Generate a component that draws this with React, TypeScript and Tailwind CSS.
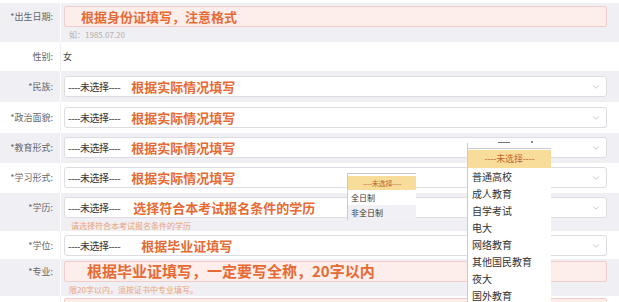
import { ChevronDown } from "lucide-react";

const font = { fontFamily: '"Noto Sans CJK SC", "Noto Sans", sans-serif' };

const Label = ({ text, top, h }: { text: string; top: number; h: number }) => (
    <div className="w-[60px] shrink-0 pr-[7px]">
        <div
            className="flex items-center justify-end text-[9px] text-[#666]"
            style={{ marginTop: top, height: h }}
        >
            {text}
        </div>
    </div>
);

const Select = ({ note, noteGap }: { note: string; noteGap: string }) => (
    <div className="h-[21px] rounded-[3px] border border-[#dcdce2] bg-white flex items-center pl-[3px] pr-[5px]">
        <span className="text-[10px] text-[#333] tracking-[-0.5px]">----未选择----</span>
        <span className={`${noteGap} text-[13px] font-bold text-[#e66a33]`}>{note}</span>
        <ChevronDown className="ml-auto text-[#aaa]" size={10} strokeWidth={1.5} />
    </div>
);

const Pink = ({ note, cls }: { note: string; cls: string }) => (
    <div className="h-[21px] rounded-[2px] border border-[#f0cdca] bg-[#fdeeec] flex items-center">
        <span className={`${cls} font-bold text-[#e66a33]`}>{note}</span>
    </div>
);

export default function App() {
    return (
        <div className="relative w-[619px] h-[302px] overflow-hidden bg-white" style={font}>
            {/* 出生日期 */}
            <div className="flex h-[42px] bg-[#efeff4] border-t-[3px] border-white">
                <Label text="*出生日期:" top={3} h={21} />
                <div className="flex-1 border-l border-white pl-[3px] pr-[12px] pt-[3px]">
                    <Pink note="根据身份证填写，注意格式" cls="ml-[16px] text-[13px]" />
                    <div className="mt-[3px] ml-[5px] text-[8px] leading-[10px] text-[#b5b0aa]">如：1985.07.20</div>
                </div>
            </div>
            {/* 性别 */}
            <div className="flex h-[29px] bg-white">
                <Label text="性别:" top={4} h={21} />
                <div className="flex-1 border-l border-[#efeff4] pl-[2px] pt-[4px]">
                    <div className="h-[21px] flex items-center text-[9px] text-[#444]">女</div>
                </div>
            </div>
            {/* 民族 */}
            <div className="flex h-[31px] bg-[#efeff4]">
                <Label text="*民族:" top={5} h={21} />
                <div className="flex-1 border-l border-white pl-[3px] pr-[12px] pt-[5px]">
                    <Select note="根据实际情况填写" noteGap="ml-[11px]" />
                </div>
            </div>
            {/* 政治面貌 */}
            <div className="flex h-[31px] bg-white">
                <Label text="*政治面貌:" top={5} h={21} />
                <div className="flex-1 border-l border-[#efeff4] pl-[3px] pr-[12px] pt-[5px]">
                    <Select note="根据实际情况填写" noteGap="ml-[11px]" />
                </div>
            </div>
            {/* 教育形式 */}
            <div className="flex h-[30px] bg-[#efeff4]">
                <Label text="*教育形式:" top={4} h={21} />
                <div className="flex-1 border-l border-white pl-[3px] pr-[12px] pt-[4px]">
                    <Select note="根据实际情况填写" noteGap="ml-[11px]" />
                </div>
            </div>
            {/* 学习形式 */}
            <div className="flex h-[30px] bg-white">
                <Label text="*学习形式:" top={4} h={21} />
                <div className="flex-1 border-l border-[#efeff4] pl-[3px] pr-[12px] pt-[4px]">
                    <Select note="根据实际情况填写" noteGap="ml-[11px]" />
                </div>
            </div>
            {/* 学历 */}
            <div className="flex h-[38px] bg-[#efeff4]">
                <Label text="*学历:" top={4} h={21} />
                <div className="flex-1 border-l border-white pl-[3px] pr-[12px] pt-[4px]">
                    <Select note="选择符合本考试报名条件的学历" noteGap="ml-[13px]" />
                    <div className="mt-[3px] ml-[7px] text-[8px] leading-[10px] text-[#eba27c]">请选择符合本考试报名条件的学历</div>
                </div>
            </div>
            {/* 学位 */}
            <div className="flex h-[28px] bg-white">
                <Label text="*学位:" top={4} h={21} />
                <div className="flex-1 border-l border-[#efeff4] pl-[3px] pr-[12px] pt-[4px]">
                    <Select note="根据毕业证填写" noteGap="ml-[21px]" />
                </div>
            </div>
            {/* 专业 */}
            <div className="flex h-[37px] bg-[#efeff4]">
                <Label text="*专业:" top={2} h={21} />
                <div className="flex-1 border-l border-white pl-[3px] pr-[12px] pt-[2px]">
                    <Pink note="根据毕业证填写，一定要写全称，20字以内" cls="ml-[22px] text-[15px]" />
                    <div className="mt-[3px] ml-[5px] text-[8px] leading-[10px] text-[#eba27c]">限20字以内，须按证书中专业填写。</div>
                </div>
            </div>
            {/* next row */}
            <div className="flex h-[10px] bg-white">
                <div className="w-[60px] shrink-0" />
                <div className="flex-1 border-l border-[#efeff4] pl-[3px] pr-[12px] pt-[2px]">
                    <div className="h-[21px] rounded-[2px] border border-[#f0cdca] bg-[#fdeeec]" />
                </div>
            </div>

            {/* 学习形式 dropdown */}
            <div className="absolute left-[347px] top-[173px] w-[69px] bg-white border-l border-t border-[#c9c9cf] text-[8px] text-[#333]">
                <div className="mt-[2px] h-[14px] bg-[#f8dc9a] flex items-center justify-center text-[#c0632a] text-[7px] tracking-[-0.2px]">----未选择----</div>
                <div className="h-[15px] flex items-center pl-[3px]">全日制</div>
                <div className="h-[15px] flex items-center pl-[3px] bg-[#f1f1f5]">非全日制</div>
            </div>

            {/* 教育形式 dropdown */}
            <div className="absolute left-[498px] top-[142px] w-[12px] h-[1px] bg-[#777]" />
            <div className="absolute left-[531px] top-[141px] w-[2px] h-[2px] bg-[#666] rounded-full" />
            <div className="absolute left-[467px] top-[143px] w-[1px] h-[6px] bg-[#c9c9cf]" />
            <div className="absolute left-[467px] top-[148px] w-[84px] h-[160px] bg-white border-l border-t border-[#c9c9cf] text-[10px] text-[#333]">
                <div className="mt-[1px] h-[18px] bg-[#f8dc9a] flex items-center justify-center text-[#c0632a] text-[9px] tracking-[-0.2px]">----未选择----</div>
                {["普通高校", "成人教育", "自学考试", "电大", "网络教育", "其他国民教育", "夜大", "国外教育"].map((t) => (
                    <div key={t} className="h-[17px] flex items-center pl-[4px]">{t}</div>
                ))}
            </div>
        </div>
    );
}
